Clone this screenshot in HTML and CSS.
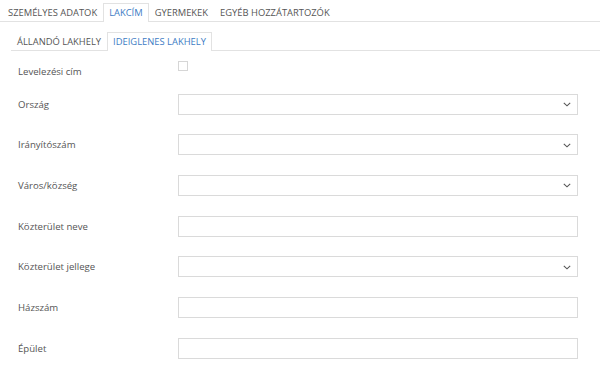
FILE: index.html
```html
<!DOCTYPE html>
<html lang="hu">
<head>
  <meta charset="utf-8">
  <title>Lakcím</title>
  <link rel="stylesheet" href="styles.css">
</head>
<body>

  <ul class="tabs main-tabs">
    <li class="tab">Személyes adatok</li>
    <li class="tab active">Lakcím</li>
    <li class="tab">Gyermekek</li>
    <li class="tab">Egyéb hozzátartozók</li>
  </ul>

  <ul class="tabs sub-tabs">
    <li class="tab">Állandó lakhely</li>
    <li class="tab active">Ideiglenes lakhely</li>
  </ul>

  <div class="form">
    <div class="row check-row">
      <label class="label">Levelezési cím</label>
      <span class="checkbox"></span>
    </div>
    <div class="row">
      <label class="label">Ország</label>
      <div class="field select"><svg class="chev" width="8" height="5" viewBox="0 0 8 5"><path d="M0.8 0.8 L4 3.8 L7.2 0.8" fill="none" stroke="#555" stroke-width="1.1"/></svg></div>
    </div>
    <div class="row">
      <label class="label">Irányítószám</label>
      <div class="field select"><svg class="chev" width="8" height="5" viewBox="0 0 8 5"><path d="M0.8 0.8 L4 3.8 L7.2 0.8" fill="none" stroke="#555" stroke-width="1.1"/></svg></div>
    </div>
    <div class="row">
      <label class="label">Város/község</label>
      <div class="field select"><svg class="chev" width="8" height="5" viewBox="0 0 8 5"><path d="M0.8 0.8 L4 3.8 L7.2 0.8" fill="none" stroke="#555" stroke-width="1.1"/></svg></div>
    </div>
    <div class="row">
      <label class="label">Közterület neve</label>
      <div class="field"></div>
    </div>
    <div class="row">
      <label class="label">Közterület jellege</label>
      <div class="field select"><svg class="chev" width="8" height="5" viewBox="0 0 8 5"><path d="M0.8 0.8 L4 3.8 L7.2 0.8" fill="none" stroke="#555" stroke-width="1.1"/></svg></div>
    </div>
    <div class="row">
      <label class="label">Házszám</label>
      <div class="field"></div>
    </div>
    <div class="row">
      <label class="label">Épület</label>
      <div class="field"></div>
    </div>
  </div>

</body>
</html>
```

FILE: styles.css
```css
html, body {
    margin: 0;
    padding: 0;
    background: #fff;
}

body {
    font-family: "Open Sans", "Liberation Sans", sans-serif;
    font-size: 9.6px;
    color: #555;
}

.tabs {
    list-style: none;
    margin: 0;
    padding: 0;
    display: flex;
    border-bottom: 1px solid #e2e2e2;
}

.main-tabs {
    padding-top: 3px;
    padding-left: 2px;
}

.sub-tabs {
    margin-top: 10px;
    margin-left: 11px;
}

.tab {
    text-transform: uppercase;
    font-size: 9.4px;
    height: 17px;
    line-height: 18px;
    padding: 0 5px;
    border: 1px solid transparent;
    border-bottom: none;
    margin-bottom: -1px;
    background: #fff;
    color: #555;
}

.tab.active {
    border-color: #e2e2e2;
    color: #3d7cc4;
    height: 18px;
}

.form {
    padding: 9px 22px 0 18px;
}

.row {
    display: flex;
    align-items: center;
    height: 21px;
    margin-top: 19.67px;
}

.check-row {
    margin-top: 0;
    margin-bottom: -7px;
    align-items: flex-start;
}

.check-row .label {
    line-height: 21px;
    margin-top: 1px;
}

.label {
    width: 160px;
    flex-shrink: 0;
}

.checkbox {
    width: 8px;
    height: 8px;
    border: 1px solid #d6d6d6;
    margin-top: 1px;
}

.field {
    flex: 1;
    height: 19px;
    border: 1px solid #dadada;
    display: flex;
    align-items: center;
    justify-content: flex-end;
}

.chev {
    margin-right: 6px;
    margin-top: 1px;
}
```
